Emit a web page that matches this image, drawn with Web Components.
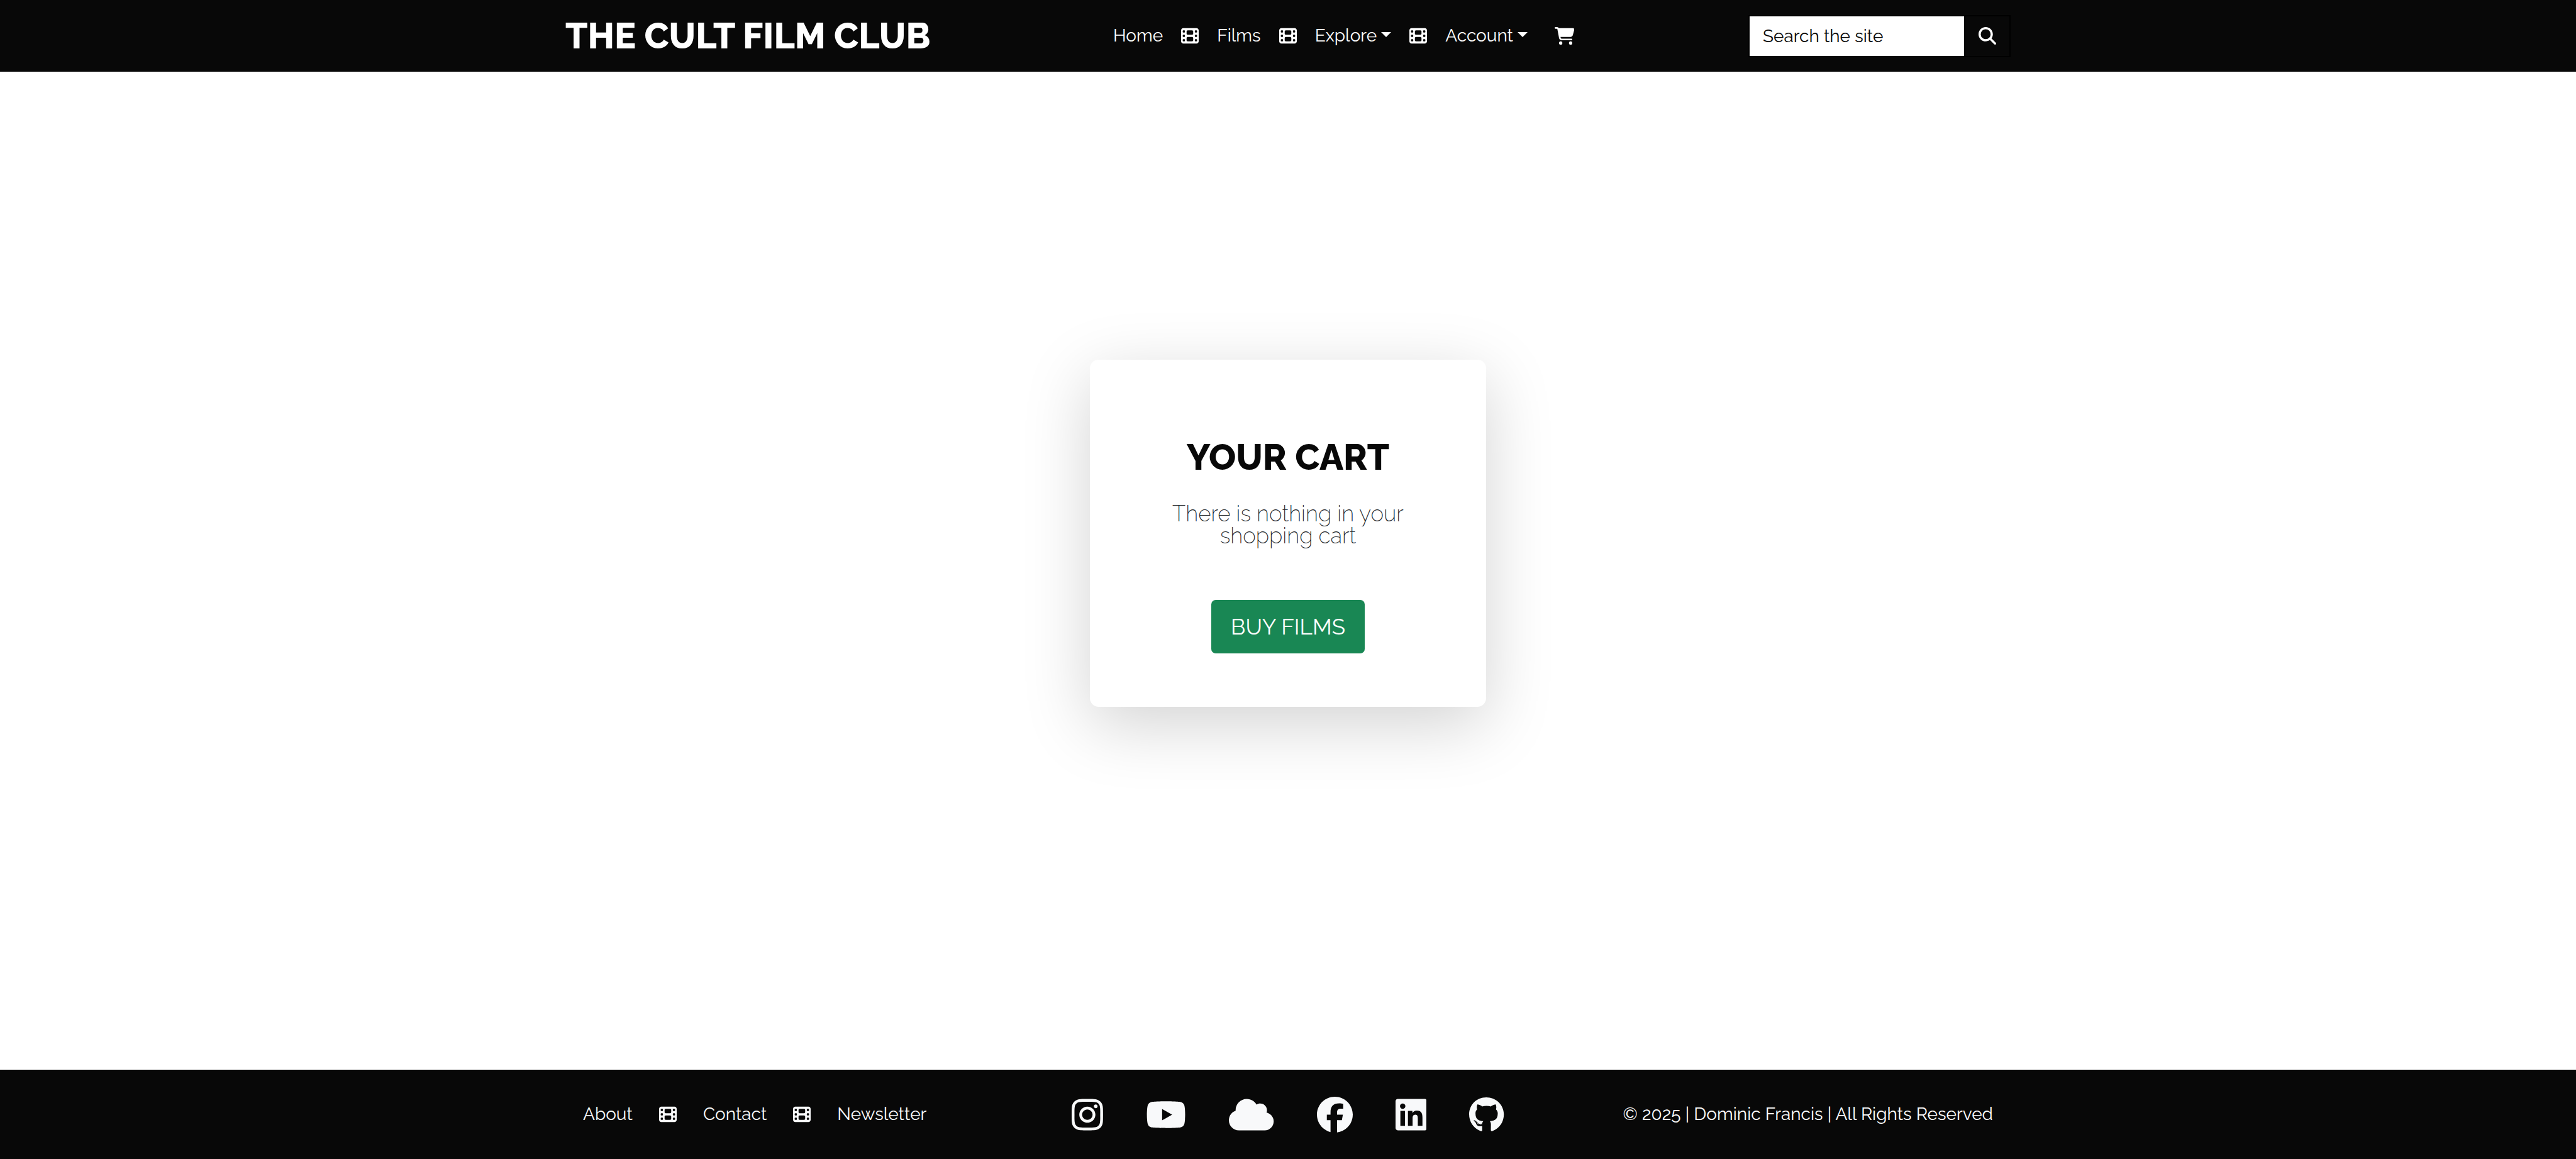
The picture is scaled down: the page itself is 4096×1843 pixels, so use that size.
<!DOCTYPE html>
<html lang="en">
<head>
<meta charset="utf-8">
<meta name="viewport" content="width=device-width, initial-scale=1">
<title>The Cult Film Club</title>
<style>
  html { --ink: #080808; --paper: #fff; --light: #f8f9fa; --green: #198754; }
  body { margin: 0; min-height: 100vh; display: flex; flex-direction: column; background: var(--paper); color: var(--ink); font: 400 28px/42px Raleway, "Open Sans", sans-serif; }
  main { flex: 1; display: flex; align-items: center; justify-content: center; padding-bottom: 120px; }
</style>
</head>
<body>
<site-header>
  <nav-link href="#home">Home</nav-link>
  <fa-icon name="film"></fa-icon>
  <nav-link href="#films">Films</nav-link>
  <fa-icon name="film"></fa-icon>
  <nav-menu>Explore</nav-menu>
  <fa-icon name="film"></fa-icon>
  <nav-menu>Account</nav-menu>
  <cart-link href="#cart"></cart-link>
</site-header>
<main>
  <cart-card>
    <span slot="title">YOUR CART</span>
    There is nothing in your shopping cart
    <span slot="action">BUY FILMS</span>
  </cart-card>
</main>
<site-footer>
  <nav-link slot="links" href="#about">About</nav-link>
  <fa-icon slot="links" name="film"></fa-icon>
  <nav-link slot="links" href="#contact">Contact</nav-link>
  <fa-icon slot="links" name="film"></fa-icon>
  <nav-link slot="links" href="#newsletter">Newsletter</nav-link>
  <social-link name="instagram"></social-link>
  <social-link name="youtube"></social-link>
  <social-link name="cloud"></social-link>
  <social-link name="facebook"></social-link>
  <social-link name="linkedin"></social-link>
  <social-link name="github"></social-link>
  <span slot="legal">© 2025 | Dominic Francis | All Rights Reserved</span>
</site-footer>

<script>
const ICONS = {
  film: [512, "M0 96C0 60.7 28.7 32 64 32l384 0c35.3 0 64 28.7 64 64l0 320c0 35.3-28.7 64-64 64L64 480c-35.3 0-64-28.7-64-64L0 96zM48 368l0 32c0 8.8 7.2 16 16 16l32 0c8.8 0 16-7.2 16-16l0-32c0-8.8-7.2-16-16-16l-32 0c-8.8 0-16 7.2-16 16zm368-16c-8.8 0-16 7.2-16 16l0 32c0 8.8 7.2 16 16 16l32 0c8.8 0 16-7.2 16-16l0-32c0-8.8-7.2-16-16-16l-32 0zM48 240l0 32c0 8.8 7.2 16 16 16l32 0c8.8 0 16-7.2 16-16l0-32c0-8.8-7.2-16-16-16l-32 0c-8.8 0-16 7.2-16 16zm368-16c-8.8 0-16 7.2-16 16l0 32c0 8.8 7.2 16 16 16l32 0c8.8 0 16-7.2 16-16l0-32c0-8.8-7.2-16-16-16l-32 0zM48 112l0 32c0 8.8 7.2 16 16 16l32 0c8.8 0 16-7.2 16-16l0-32c0-8.8-7.2-16-16-16L64 96c-8.8 0-16 7.2-16 16zM416 96c-8.8 0-16 7.2-16 16l0 32c0 8.8 7.2 16 16 16l32 0c8.8 0 16-7.2 16-16l0-32c0-8.8-7.2-16-16-16l-32 0zM160 128l0 64c0 17.7 14.3 32 32 32l128 0c17.7 0 32-14.3 32-32l0-64c0-17.7-14.3-32-32-32L192 96c-17.7 0-32 14.3-32 32zm32 160c-17.7 0-32 14.3-32 32l0 64c0 17.7 14.3 32 32 32l128 0c17.7 0 32-14.3 32-32l0-64c0-17.7-14.3-32-32-32l-128 0z"],
  cart: [576, "M0 24C0 10.7 10.7 0 24 0L69.5 0c22 0 41.5 12.8 50.6 32l411 0c26.3 0 45.5 25 38.6 50.4l-41 152.3c-8.5 31.4-37 53.3-69.5 53.3l-288.5 0 5.4 28.5c2.2 11.3 12.1 19.5 23.6 19.5L488 336c13.3 0 24 10.7 24 24s-10.7 24-24 24l-288.3 0c-34.6 0-64.3-24.6-70.7-58.5L77.4 54.5c-.7-3.8-4-6.5-7.9-6.5L24 48C10.7 48 0 37.3 0 24zM128 464a48 48 0 1 1 96 0 48 48 0 1 1 -96 0zm336-48a48 48 0 1 1 0 96 48 48 0 1 1 0-96z"],
  search: [512, "M416 208c0 45.9-14.9 88.3-40 122.7L502.6 457.4c12.5 12.5 12.5 32.8 0 45.3s-32.8 12.5-45.3 0L330.7 376c-34.4 25.2-76.8 40-122.7 40C93.1 416 0 322.9 0 208S93.1 0 208 0S416 93.1 416 208zM208 352a144 144 0 1 0 0-288 144 144 0 1 0 0 288z"],
  instagram: [448, "M224.1 141c-63.6 0-114.9 51.3-114.9 114.9s51.3 114.9 114.9 114.9S339 319.5 339 255.9 287.7 141 224.1 141zm0 189.6c-41.1 0-74.7-33.5-74.7-74.7s33.5-74.7 74.7-74.7 74.7 33.5 74.7 74.7-33.6 74.7-74.7 74.7zm146.4-194.3c0 14.9-12 26.8-26.8 26.8-14.9 0-26.8-12-26.8-26.8s12-26.8 26.8-26.8 26.8 12 26.8 26.8zm76.1 27.2c-1.7-35.9-9.9-67.7-36.2-93.9-26.2-26.2-58-34.4-93.9-36.2-37-2.1-147.9-2.1-184.9 0-35.8 1.7-67.6 9.9-93.9 36.1s-34.4 58-36.2 93.9c-2.1 37-2.1 147.9 0 184.9 1.7 35.9 9.9 67.7 36.2 93.9s58 34.4 93.9 36.2c37 2.1 147.9 2.1 184.9 0 35.9-1.7 67.7-9.9 93.9-36.2 26.2-26.2 34.4-58 36.2-93.9 2.1-37 2.1-147.8 0-184.8zM398.8 388c-7.8 19.6-22.9 34.7-42.6 42.6-29.5 11.7-99.5 9-132.1 9s-102.7 2.6-132.1-9c-19.6-7.8-34.7-22.9-42.6-42.6-11.7-29.5-9-99.5-9-132.1s-2.6-102.7 9-132.1c7.8-19.6 22.9-34.7 42.6-42.6 29.5-11.7 99.5-9 132.1-9s102.7-2.6 132.1 9c19.6 7.8 34.7 22.9 42.6 42.6 11.7 29.5 9 99.5 9 132.1s2.7 102.7-9 132.1z"],
  youtube: [576, "M549.655 124.083c-6.281-23.65-24.787-42.276-48.284-48.597C458.781 64 288 64 288 64S117.22 64 74.629 75.486c-23.497 6.322-42.003 24.947-48.284 48.597-11.412 42.867-11.412 132.305-11.412 132.305s0 89.438 11.412 132.305c6.281 23.65 24.787 41.5 48.284 47.821C117.22 448 288 448 288 448s170.78 0 213.371-11.486c23.497-6.321 42.003-24.171 48.284-47.821 11.412-42.867 11.412-132.305 11.412-132.305s0-89.438-11.412-132.305zm-317.51 213.508V175.185l142.739 81.205-142.739 81.201z"],
  cloud: [640, "M0 336c0 79.5 64.5 144 144 144l368 0c70.7 0 128-57.3 128-128c0-61.9-44-113.6-102.4-125.4c4.1-10.7 6.4-22.4 6.4-34.6c0-53-43-96-96-96c-19.7 0-38.1 6-53.3 16.2C367 64.2 315.3 32 256 32C167.6 32 96 103.6 96 192c0 2.7 .1 5.4 .2 8.1C40.2 219.8 0 273.2 0 336z"],
  facebook: [512, "M512 256C512 114.6 397.4 0 256 0S0 114.6 0 256C0 376 82.7 476.8 194.2 504.5V334.2H141.4V256h52.8V222.3c0-87.1 39.4-127.5 125-127.5c16.2 0 44.2 3.2 55.7 6.4V172c-6-.6-16.5-1-29.6-1c-42 0-58.2 15.9-58.2 57.2V256h83.6l-14.4 78.2H287V510.1C413.8 494.8 512 386.9 512 256h0z"],
  linkedin: [448, "M416 32H31.9C14.3 32 0 46.5 0 64.3v383.4C0 465.5 14.3 480 31.9 480H416c17.6 0 32-14.5 32-32.3V64.3c0-17.8-14.4-32.3-32-32.3zM135.4 416H69V202.2h66.5V416zm-33.2-243c-21.3 0-38.5-17.3-38.5-38.5S80.9 96 102.2 96c21.2 0 38.5 17.3 38.5 38.5 0 21.3-17.2 38.5-38.5 38.5zm282.1 243h-66.4V312c0-24.8-.5-56.7-34.5-56.7-34.6 0-39.9 27-39.9 54.9V416h-66.4V202.2h63.7v29.2h.9c8.9-16.8 30.6-34.5 62.9-34.5 67.2 0 79.7 44.3 79.7 101.9V416z"],
  github: [496, "M165.9 397.4c0 2-2.3 3.6-5.2 3.6-3.3.3-5.6-1.3-5.6-3.6 0-2 2.3-3.6 5.2-3.6 3-.3 5.6 1.3 5.6 3.6zm-31.1-4.5c-.7 2 1.3 4.3 4.3 4.9 2.6 1 5.6 0 6.2-2s-1.3-4.3-4.3-5.2c-2.6-.7-5.5.3-6.2 2.3zm44.2-1.7c-2.9.7-4.9 2.6-4.6 4.9.3 2 2.9 3.3 5.9 2.6 2.9-.7 4.9-2.6 4.6-4.6-.3-1.9-3-3.2-5.9-2.9zM244.8 8C106.1 8 0 113.3 0 252c0 110.9 69.8 205.8 169.5 239.2 12.8 2.3 17.3-5.6 17.3-12.1 0-6.2-.3-40.4-.3-61.4 0 0-70 15-84.7-29.8 0 0-11.4-29.1-27.8-36.6 0 0-22.9-15.7 1.6-15.4 0 0 24.9 2 38.6 25.8 21.9 38.6 58.6 27.5 72.9 20.9 2.3-16 8.8-27.1 16-33.7-55.9-6.2-112.3-14.3-112.3-110.5 0-27.5 7.6-41.3 23.6-58.9-2.6-6.5-11.1-33.3 2.6-67.9 20.9-6.5 69 27 69 27 20-5.6 41.5-8.5 62.8-8.5s42.8 2.9 62.8 8.5c0 0 48.1-33.6 69-27 13.7 34.7 5.2 61.4 2.6 67.9 16 17.7 25.8 31.5 25.8 58.9 0 96.5-58.9 104.2-114.8 110.5 9.2 7.9 17 22.9 17 46.4 0 33.7-.3 75.4-.3 83.6 0 6.5 4.6 14.4 17.3 12.1C428.2 457.8 496 362.9 496 252 496 113.3 383.5 8 244.8 8zM97.2 352.9c-1.3 1-1 3.3.7 5.2 1.6 1.6 3.9 2.3 5.2 1 1.3-1 1-3.3-.7-5.2-1.6-1.6-3.9-2.3-5.2-1zm-10.8-8.1c-.7 1.3.3 2.9 2.3 3.9 1.6 1 3.6.7 4.3-.7.7-1.3-.3-2.9-2.3-3.9-2-.6-3.6-.3-4.3.7zm32.4 35.6c-1.6 1.3-1 4.3 1.3 6.2 2.3 2.3 5.2 2.6 6.5 1 1.3-1.3.7-4.3-1.3-6.2-2.2-2.3-5.2-2.6-6.5-1zm-11.4-14.7c-1.6 1-1.6 3.6 0 5.9 1.6 2.3 4.3 3.3 5.6 2.3 1.6-1.3 1.6-3.9 0-6.2-1.4-2.3-4-3.3-5.6-2z"]
};

function define(name, render) {
  customElements.define(name, class extends HTMLElement {
    constructor() {
      super();
      this.attachShadow({ mode: "open" });
    }
    connectedCallback() {
      this.shadowRoot.innerHTML = render(this);
    }
  });
}

define("fa-icon", el => {
  const [width, path] = ICONS[el.getAttribute("name")];
  return `<style>
    :host { display: block; flex: none; }
    svg { display: block; height: var(--icon-size, 28px); width: auto; fill: currentColor; }
  </style>
  <svg viewBox="0 0 ${width} 512" aria-hidden="true"><path d="${path}"/></svg>`;
});

define("nav-link", el => `<style>
    :host { display: block; }
    a { color: inherit; text-decoration: none; }
  </style>
  <a href="${el.getAttribute("href")}"><slot></slot></a>`);

define("nav-menu", () => `<style>
    :host { display: block; }
    button { display: block; padding: 0; border: 0; background: none; color: inherit; font: inherit; cursor: pointer; white-space: nowrap; }
    button::after { content: ""; display: inline-block; margin-left: 7px; vertical-align: 7px; border: 8px solid transparent; border-top-color: currentColor; border-bottom: 0; }
  </style>
  <button type="button" aria-haspopup="true" aria-expanded="false"><slot></slot></button>`);

define("cart-link", el => `<style>
    :host { display: block; padding: 0 14px; }
    a { display: block; color: inherit; }
  </style>
  <a href="${el.getAttribute("href")}" aria-label="Shopping cart"><fa-icon name="cart"></fa-icon></a>`);

define("social-link", el => `<style>
    :host { display: block; --icon-size: 57px; }
    a { display: block; color: inherit; }
  </style>
  <a href="#${el.getAttribute("name")}" aria-label="${el.getAttribute("name")}"><fa-icon name="${el.getAttribute("name")}"></fa-icon></a>`);

define("site-search", () => `<style>
    :host { display: block; }
    form { display: flex; margin: 0; }
    input, button { box-sizing: border-box; height: 67px; margin: 0; border: 2px solid #000; border-radius: 0; font: inherit; }
    input { width: 345px; padding: 0 21px; background: var(--paper); color: var(--ink); }
    input::placeholder { color: var(--ink); opacity: 1; }
    button { margin-left: -2px; padding: 0 21px; background: var(--ink); color: var(--paper); cursor: pointer; }
  </style>
  <form role="search" onsubmit="return false">
    <input type="search" placeholder="Search the site" aria-label="Search the site">
    <button type="submit" aria-label="Search"><fa-icon name="search"></fa-icon></button>
  </form>`);

define("site-header", () => `<style>
    :host { display: block; background: var(--ink); color: var(--paper); }
    header { box-sizing: border-box; max-width: 2340px; min-height: 114px; margin: 0 auto; padding: 0 21px; display: flex; align-items: center; justify-content: space-between; }
    .brand { margin-right: 28px; color: inherit; text-decoration: none; font-size: 57px; line-height: 72px; font-weight: 800; white-space: nowrap; }
    nav { display: flex; align-items: center; gap: 29px; }
  </style>
  <header>
    <a class="brand" href="#home">THE CULT FILM CLUB</a>
    <nav aria-label="Main"><slot></slot></nav>
    <site-search></site-search>
  </header>`);

define("cart-card", () => `<style>
    :host { display: block; }
    section { box-sizing: border-box; width: 630px; padding: 126px 85px 85px; display: flex; flex-direction: column; align-items: center; text-align: center; border-radius: 14px; background: var(--paper); box-shadow: 0 28px 106px rgba(0, 0, 0, .175); }
    h1 { margin: 0 0 44px; font-size: 57px; line-height: 57px; font-weight: 800; }
    p { margin: 0 0 85px; font-size: 35px; line-height: 35px; font-weight: 200; color: #212529; }
    a { padding: 0 31px; border-radius: 7px; background: var(--green); color: var(--paper); font-size: 35px; line-height: 85px; text-decoration: none; }
  </style>
  <section>
    <h1><slot name="title"></slot></h1>
    <p><slot></slot></p>
    <a href="#films"><slot name="action"></slot></a>
  </section>`);

define("site-footer", () => `<style>
    :host { display: block; background: var(--ink); color: var(--light); }
    footer { box-sizing: border-box; max-width: 2340px; min-height: 142px; margin: 0 auto; padding: 0 49px; display: grid; grid-template-columns: 1fr auto 1fr; align-items: center; }
    nav, .social { display: flex; align-items: center; }
    nav { gap: 42px; }
    .social { gap: 68px; }
    p { margin: 0; text-align: right; color: var(--paper); }
  </style>
  <footer>
    <nav aria-label="Footer"><slot name="links"></slot></nav>
    <div class="social"><slot></slot></div>
    <p><slot name="legal"></slot></p>
  </footer>`);
</script>
</body>
</html>
